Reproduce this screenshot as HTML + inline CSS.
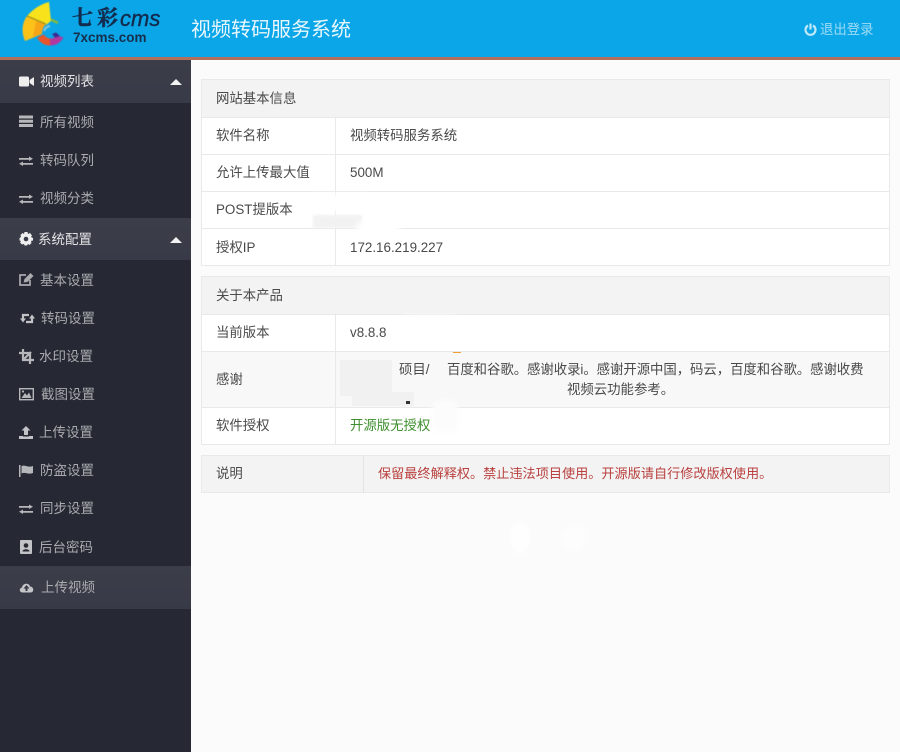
<!DOCTYPE html>
<html lang="zh-CN"><head><meta charset="utf-8"><title>视频转码服务系统</title>
<style>
*{box-sizing:border-box}
html,body{margin:0;padding:0;width:900px;height:752px;overflow:hidden;background:#fbfbfb}
body{position:relative;font-family:"Liberation Sans","Noto Sans CJK SC",sans-serif;font-size:13.4px;color:#444}
.a{position:absolute;white-space:nowrap}
#hd{left:0;top:0;width:900px;height:57px;background:#0aa6e8}
#ln{left:0;top:57px;width:900px;height:3px;background:#b36f5c}
#sb{left:0;top:60px;width:191px;height:692px;background:#262933}
.act{left:0;width:191px;background:linear-gradient(#3b3e49,#383b47)}
.m{left:40px;color:#a9abaf;font-size:13.5px;line-height:18px;filter:blur(.35px);margin-top:1px}
.m.w{color:#e2e3e5}
.i{left:19px;width:15px;height:15px;overflow:visible}
.row{left:201px;width:689px;border:1px solid #e9e9e9;background:#fff}
.g{background:#f3f3f3}
.s{background:#f8f8f8}
.t{font-size:13.4px;line-height:18px;color:#4a4a4a;filter:blur(.35px)}
.v{left:335px;top:0;width:1px;background:#e9e9e9}
.blob{background:#fff;filter:blur(3px);border-radius:8px}
</style></head><body>
<div class="a" id="hd"></div>
<svg class="a" style="left:0;top:0;filter:blur(.4px)" width="70" height="50" viewBox="0 0 70 50">
<path d="M27 16C33 9 41 4 49 2L51 21 46 25Z" fill="#f7e21c"/>
<path d="M27 16L46 24C43 27 42 30 42 34L25 41C21 32 22 23 27 16Z" fill="#fcc21a"/>
<path d="M36 21L46 24C43 27 42 30 42 34L33 37Z" fill="#f7a516"/>
<path d="M27 16L46 24" stroke="#8f8a20" stroke-width="1" fill="none"/>
<path d="M51 19.500L58 23" stroke="#86b83a" stroke-width="2.500" fill="none"/>
<path d="M37 37.500L44 34.500C45.500 37 47 38 50 38.500L50 45.500C44 45.500 40 42.500 37 37.500Z" fill="#e8552a"/>
<path d="M50 38.500C53 38.500 55 37.500 56.500 35.500L63.500 37.500C60 43 56 45.500 50 45.500Z" fill="#b2379f"/>
<path d="M52 34L56 32.500 60 36 55 37.500Z" fill="#3a2a8c"/>
<path d="M44 31C45 28 47 26.500 50 26" stroke="#8ec5dd" stroke-width="2" fill="none"/>
</svg>
<div class="a" style="left:72px;top:2px;font:bold 21px/30px 'Noto Serif CJK SC',serif;color:#132c4e;letter-spacing:4px;-webkit-text-stroke:.5px #132c4e;filter:blur(.3px)">七彩</div>
<div class="a" style="left:120px;top:4px;font:italic 22px/30px 'Liberation Sans',sans-serif;color:#132c4e;-webkit-text-stroke:.4px #132c4e;filter:blur(.3px)">cms</div>
<div class="a" style="left:73px;top:30px;font:bold 13.500px/16px 'Liberation Sans',sans-serif;color:#172f4c;filter:blur(.35px)">7xcms.com</div>
<div class="a" style="left:191px;top:17px;font-size:20px;line-height:26px;color:#e9f7fd;filter:blur(.3px)">视频转码服务系统</div>
<svg class="a" style="left:804px;top:23px" width="13" height="13" viewBox="0 0 13 13" fill="none" stroke="#bfe8f8" stroke-width="2.200"><path d="M4 2.500A5 5 0 1 0 9 2.500M6.500 .5V6.500"/></svg>
<div class="a" style="left:820px;top:21px;line-height:18px;color:#9fdcf5;filter:blur(.35px)">退出登录</div>
<div class="a" id="ln"></div>

<div class="a" id="sb"></div>
<div class="a act" style="top:60px;height:43px"></div>
<div class="a act" style="top:218px;height:42px"></div>
<div class="a act" style="top:566px;height:43px"></div>

<svg class="a i" style="top:74px" viewBox="0 0 15 15" fill="#eee"><rect x="0" y="2.500" width="10" height="10" rx="1.500"/><path d="M10.500 6L15 3V12L10.500 9Z"/></svg>
<div class="a m w" style="top:72px">视频列表</div>
<svg class="a" style="left:170px;top:78px" width="12" height="7"><path d="M0 7L6 1 12 7Z" fill="#f2f2f2"/></svg>

<svg class="a i" style="top:114px" viewBox="0 0 15 15" fill="#b5b7ba"><path d="M0 1.500H14V4.500H0ZM0 5.700H14V8.700H0ZM0 10H14V13H0Z"/></svg>
<div class="a m" style="top:113px">所有视频</div>
<svg class="a i" style="top:153px" viewBox="0 0 15 15" fill="#b5b7ba"><path d="M0 5H10V3.500L14 5.800 10 8V6.700H0ZM14 10H4V8.500L0 10.800 4 13V11.800H14Z"/></svg>
<div class="a m" style="top:151px">转码队列</div>
<svg class="a i" style="top:191px" viewBox="0 0 15 15" fill="#b5b7ba"><path d="M0 5H10V3.500L14 5.800 10 8V6.700H0ZM14 10H4V8.500L0 10.800 4 13V11.800H14Z"/></svg>
<div class="a m" style="top:189px">视频分类</div>

<svg class="a i" style="top:231px" viewBox="0 0 15 15"><path d="M5.500 1H8.500L9 3 11 2 13 4.500 12 6 14 7V9.500L12 10 12.500 12 10.500 14 9 13 8 14.500H5.500L5 13 3 13.500 1 11.500 2 10 .5 9.500V7L2 6 1.500 4 3.500 2 5 3Z" fill="#eee"/><circle cx="7" cy="8" r="2.300" fill="#3a3d49"/></svg>
<div class="a m w" style="top:230px;left:38px">系统配置</div>
<svg class="a" style="left:170px;top:236px" width="12" height="7"><path d="M0 7L6 1 12 7Z" fill="#f2f2f2"/></svg>

<svg class="a i" style="top:272px" viewBox="0 0 15 15" fill="none" stroke="#a9abaf" stroke-width="1.700"><path d="M11 8V13H1V3H7"/><path d="M4.500 10.500L5.500 7 11.500 1 14.500 4 8.500 10Z" fill="#a9abaf" stroke="none"/></svg>
<div class="a m" style="top:271px">基本设置</div>
<svg class="a i" style="left:20px;top:311px" viewBox="0 0 15 15" fill="none" stroke="#c2c3c6" stroke-width="2.200"><path d="M3 9V4H9M12 6V11H6"/><path d="M0 7.500H6L3 11.500ZM9 7.500H15L12 3.500Z" fill="#c2c3c6" stroke="none"/></svg>
<div class="a m" style="top:309px;left:41px">转码设置</div>
<svg class="a i" style="top:349px" viewBox="0 0 15 15" fill="none" stroke="#b5b7ba" stroke-width="2.200"><path d="M4 0V11H15M0 4H11V15M12 3L4 11"/></svg>
<div class="a m" style="top:347px;left:39px">水印设置</div>
<svg class="a i" style="top:387px" viewBox="0 0 15 15"><rect x=".7" y="1.700" width="13.600" height="11" fill="none" stroke="#b5b7ba" stroke-width="1.400"/><path d="M2.500 11L6 6 8 8.500 10 5.500 12.500 11Z" fill="#b5b7ba"/><circle cx="4" cy="4.500" r="1.100" fill="#b5b7ba"/></svg>
<div class="a m" style="top:385px;left:41px">截图设置</div>
<svg class="a i" style="top:425px" viewBox="0 0 15 15" fill="#c2c3c6"><path d="M7 1L11.500 5.500H9V10H5V5.500H2.500ZM0 11H4V11.500H10V11H14V14H0Z"/></svg>
<div class="a m" style="top:423px;left:39px">上传设置</div>
<svg class="a i" style="top:463px" viewBox="0 0 15 15" fill="#b5b7ba"><path d="M0 2H1.500V14H0ZM2.500 3C6 1.500 9 5 14 3V10C9 12 6 8.500 2.500 10.500Z"/></svg>
<div class="a m" style="top:461px">防盗设置</div>
<svg class="a i" style="top:501px" viewBox="0 0 15 15" fill="#b5b7ba"><path d="M0 5H10V3.500L14 5.800 10 8V6.700H0ZM14 10H4V8.500L0 10.800 4 13V11.800H14Z"/></svg>
<div class="a m" style="top:499px;left:40px">同步设置</div>
<svg class="a i" style="top:540px" viewBox="0 0 15 15"><rect x="1" y="0" width="12" height="14" rx="1" fill="#c2c3c6"/><circle cx="7" cy="5.500" r="2.300" fill="#262933"/><path d="M3.500 11.500C3.500 8.500 10.500 8.500 10.500 11.500Z" fill="#262933"/></svg>
<div class="a m" style="top:538px;left:39px">后台密码</div>
<svg class="a i" style="top:580px" viewBox="0 0 15 15"><path d="M3.500 12.500C0 12.500 0 8 3 7.500 3.500 3 10 2.500 11 6.500 15 6.500 15.500 12.500 11.500 12.500Z" fill="#c4c5c8"/><path d="M7.500 5L10.500 8.500H8.500V11H6.500V8.500H4.500Z" fill="#383b47"/></svg>
<div class="a m" style="top:578px;left:41px">上传视频</div>

<!-- table 1 -->
<div class="a row g" style="top:79px;height:39px"></div>
<div class="a row" style="top:117px;height:38px"></div>
<div class="a row" style="top:154px;height:38px"></div>
<div class="a row" style="top:191px;height:38px"></div>
<div class="a row" style="top:228px;height:38px"></div>
<div class="a v" style="top:117px;height:149px"></div>
<div class="a t" style="left:216px;top:90px">网站基本信息</div>
<div class="a t" style="left:216px;top:127px">软件名称</div>
<div class="a t" style="left:350px;top:127px">视频转码服务系统</div>
<div class="a t" style="left:216px;top:164px">允许上传最大值</div>
<div class="a t" style="left:350px;top:164px">500M</div>
<div class="a t" style="left:216px;top:201px">POST提版本</div>
<div class="a t" style="left:216px;top:239px">授权IP</div>
<div class="a t" style="left:350px;top:239px">172.16.219.227</div>
<div class="a" style="left:313px;top:215px;width:49px;height:13px;background:#f2f2f2;filter:blur(1px)"></div>
<div class="a blob" style="left:312px;top:194px;width:60px;height:18px"></div>
<div class="a blob" style="left:356px;top:222px;width:44px;height:12px"></div>

<!-- table 2 -->
<div class="a row g" style="top:276px;height:39px"></div>
<div class="a row" style="top:314px;height:38px"></div>
<div class="a row s" style="top:351px;height:57px"></div>
<div class="a row" style="top:407px;height:38px"></div>
<div class="a v" style="top:314px;height:131px"></div>
<div class="a t" style="left:216px;top:287px">关于本产品</div>
<div class="a t" style="left:216px;top:324px">当前版本</div>
<div class="a t" style="left:350px;top:324px">v8.8.8</div>
<div class="a t" style="left:216px;top:371px">感谢</div>
<div class="a" style="left:340px;top:360px;width:52px;height:36px;background:#f1f1f1"></div>
<div class="a" style="left:352px;top:392px;width:62px;height:14px;background:#f1f1f1"></div>
<div class="a" style="left:406px;top:401px;width:4px;height:3px;background:#333"></div>
<div class="a blob" style="left:432px;top:400px;width:26px;height:32px;background:#fcfcfc"></div>
<div class="a blob" style="left:400px;top:316px;width:60px;height:14px"></div>
<div class="a" style="left:453px;top:352px;width:8px;height:1px;background:#f0a030"></div>
<div class="a t" style="left:399px;top:361px">硕目/</div>
<div class="a t" style="left:447px;top:361px;width:420px;letter-spacing:-.05px">百度和谷歌。感谢收录i。感谢开源中国，码云，百度和谷歌。感谢收费</div>
<div class="a t" style="left:567px;top:381px">视频云功能参考。</div>
<div class="a t" style="left:216px;top:417px">软件授权</div>
<div class="a t" style="left:350px;top:417px;color:#3f8f2f">开源版无授权</div>

<!-- table 3 -->
<div class="a row g" style="top:455px;height:38px"></div>
<div class="a" style="left:363px;top:455px;width:1px;height:38px;background:#e4e4e4"></div>
<div class="a t" style="left:216px;top:465px">说明</div>
<div class="a t" style="left:378px;top:465px;color:#b9403f;font-size:13.150px">保留最终解释权。禁止违法项目使用。开源版请自行修改版权使用。</div>

<div class="a" style="left:510px;top:522px;width:20px;height:32px;border-radius:50%;background:#fefefe;filter:blur(2px)"></div>
<div class="a blob" style="left:562px;top:526px;width:24px;height:24px;background:#fdfdfd"></div>
</body></html>
